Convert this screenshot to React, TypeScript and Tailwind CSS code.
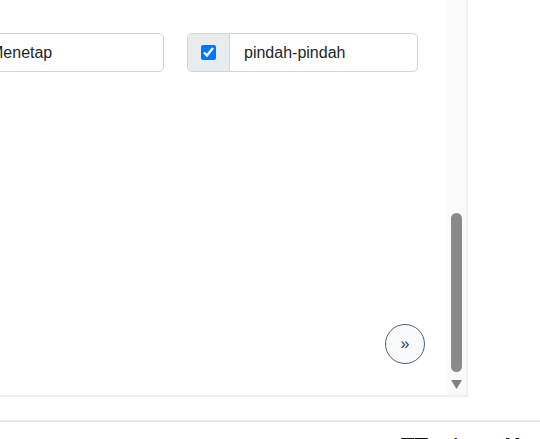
import { useState } from 'react';

interface ChoiceProps {
  label: string;
  defaultChecked?: boolean;
}

function Choice({ label, defaultChecked = true }: ChoiceProps) {
  const [checked, setChecked] = useState(defaultChecked);
  return (
    <div className="flex h-[39px] w-[231px] rounded-[5px] border border-[#ced4da] bg-white">
      <div className="flex w-[42px] items-center justify-center rounded-l-[5px] border-r border-[#ced4da] bg-[#e9ecef]">
        <input
          type="checkbox"
          checked={checked}
          onChange={(e) => setChecked(e.target.checked)}
          className="m-0 h-[15px] w-[15px]"
        />
      </div>
      <div className="flex items-center pl-[14px] text-[16px] text-[#212529]">{label}</div>
    </div>
  );
}

export default function App() {
  return (
    <div className="h-[439px] w-[540px] overflow-hidden bg-white font-['Liberation_Sans',Arial,sans-serif]">
      {/* scroll panel */}
      <div className="flex h-[397px] w-[468px] overflow-hidden border-r-2 border-b-2 border-[#efefef]">
        <div className="-ml-[67px] flex flex-1 flex-col pt-[33px]">
          <div className="flex gap-[23px]">
            <Choice label="Menetap" />
            <Choice label="pindah-pindah" />
          </div>
          <button className="mt-auto mr-[22px] mb-[31px] flex h-[40px] w-[40px] items-center justify-center self-end rounded-full border border-[#4d6179] bg-[#f7f9fb] text-[16px] leading-none text-[#1e3a5f]">
            »
          </button>
        </div>
        <div className="flex w-[19px] flex-col items-center bg-[#fafafa]">
          <div className="mt-[213px] h-[159px] w-[11px] rounded-full bg-[#8a8a8a]" />
          <svg className="mt-[8px]" width="11" height="9" viewBox="0 0 11 9">
            <polygon points="0,0 11,0 5.5,9" fill="#808080" />
          </svg>
        </div>
      </div>

      <div className="mt-[23px] h-[2px] w-full bg-[#e8e8e8]" />

      <div className="pt-[13px] pl-[401px] text-[22px] leading-none font-bold whitespace-nowrap text-[#111]">
        TTentang Kami
      </div>
    </div>
  );
}
